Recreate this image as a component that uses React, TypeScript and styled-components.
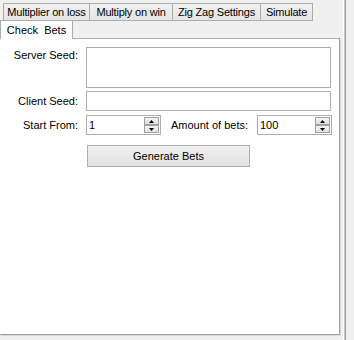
import * as React from 'react'
import styled, {createGlobalStyle} from 'styled-components'

const Global = createGlobalStyle`
  html, body {
    margin: 0;
    padding: 0;
    background: #f0f0f0;
  }
  body {
    font-family: "Liberation Sans", Arial, sans-serif;
    font-size: 11px;
    color: #000;
  }
`

const Window = styled.div`
  display: flex;
  width: 354px;
  height: 340px;
  overflow: hidden;
  background: #f0f0f0;
`

const TabControl = styled.div`
  display: flex;
  flex-direction: column;
  width: 340px;
  height: 335px;
`

const TabStrip = styled.div`
  display: flex;
  flex-direction: column;
  height: 39px;
  padding-top: 3px;
  box-sizing: border-box;
`

const TabRow = styled.div<{$indent: number}>`
  display: flex;
  padding-left: ${p => p.$indent}px;
  height: 18px;
`

const Tab = styled.div<{$w: number; $active?: boolean}>`
  box-sizing: border-box;
  width: ${p => p.$w}px;
  height: 18px;
  display: flex;
  align-items: center;
  justify-content: center;
  white-space: pre;
  letter-spacing: -0.2px;
  border: 1px solid #acacac;
  border-right: none;
  background: linear-gradient(#f0f0f0, #e5e5e5);
  &:last-child {
    border-right: 1px solid #acacac;
  }
  ${p => p.$active && `
    background: #fff;
    border-bottom: none;
    margin-top: -1px;
    height: 19px;
    position: relative;
    z-index: 1;
    letter-spacing: 0;
  `}
`

const Page = styled.div`
  flex: 1;
  background: #fff;
  border-top: 1px solid #acacac;
  border-right: 1px solid #a0a0a0;
  border-bottom: 1px solid #a0a0a0;
  box-shadow: 1px 1px 0 #d9d9d9;
  margin-top: -1px;
  padding: 8px 0 0 0;
  display: flex;
  flex-direction: column;
  gap: 3px;
`

const Row = styled.div<{$top?: boolean}>`
  display: flex;
  align-items: ${p => (p.$top ? 'flex-start' : 'center')};
`

const Label = styled.div<{$inline?: boolean}>`
  width: ${p => (p.$inline ? 77 : 78)}px;
  text-align: right;
  margin-left: ${p => (p.$inline ? 10 : 0)}px;
  margin-right: ${p => (p.$inline ? 9 : 8)}px;
  white-space: nowrap;
`

const TextBox = styled.div<{$h: number}>`
  box-sizing: border-box;
  width: 245px;
  height: ${p => p.$h}px;
  border: 1px solid #abadb3;
  background: #fff;
`

const Numeric = styled.div`
  box-sizing: border-box;
  width: 75px;
  height: 20px;
  border: 1px solid #abadb3;
  display: flex;
  align-items: center;
  padding-left: 2px;
`

const NumValue = styled.div`
  flex: 1;
`

const Spinner = styled.div`
  display: flex;
  flex-direction: column;
  width: 15px;
  height: 16px;
  margin-right: 1px;
`

const SpinButton = styled.div`
  flex: 1;
  box-sizing: border-box;
  border: 1px solid #a0a0a0;
  background: linear-gradient(#f4f4f4, #e0e0e0);
  display: flex;
  align-items: center;
  justify-content: center;
`

const Button = styled.div`
  box-sizing: border-box;
  width: 163px;
  height: 22px;
  margin-left: 87px;
  margin-top: 7px;
  border: 1px solid #adadad;
  background: linear-gradient(#f2f2f2, #e2e2e2);
  display: flex;
  align-items: center;
  justify-content: center;
`

const Side = styled.div`
  margin-left: 3px;
  width: 3px;
  height: 100%;
  border-left: 1px solid #fff;
  border-right: 1px solid #a0a0a0;
  background: #c8c8c8;
  box-sizing: border-box;
`

const Arrow = ({up}: {up?: boolean}) => (
  <svg width="5" height="3" viewBox="0 0 5 3">
    <path d={up ? 'M2.5 0L5 3H0z' : 'M0 0H5L2.5 3z'} fill="#000" />
  </svg>
)

const NumericUpDown = ({value}: {value: string}) => (
  <Numeric>
    <NumValue>{value}</NumValue>
    <Spinner>
      <SpinButton><Arrow up /></SpinButton>
      <SpinButton><Arrow /></SpinButton>
    </Spinner>
  </Numeric>
)

const App = () => (
  <Window>
    <Global />
    <TabControl>
      <TabStrip>
        <TabRow $indent={3}>
          <Tab $w={86}>Multiplier on loss</Tab>
          <Tab $w={83}>Multiply on win</Tab>
          <Tab $w={88}>Zig Zag Settings</Tab>
          <Tab $w={53}>Simulate</Tab>
        </TabRow>
        <TabRow $indent={0}>
          <Tab $w={73} $active>{'Check  Bets'}</Tab>
        </TabRow>
      </TabStrip>
      <Page>
        <Row $top>
          <Label style={{marginTop: 2}}>Server Seed:</Label>
          <TextBox $h={41} />
        </Row>
        <Row>
          <Label>Client Seed:</Label>
          <TextBox $h={20} />
        </Row>
        <Row style={{marginTop: 1}}>
          <Label>Start From:</Label>
          <NumericUpDown value="1" />
          <Label $inline>Amount of bets:</Label>
          <NumericUpDown value="100" />
        </Row>
        <Button>Generate Bets</Button>
      </Page>
    </TabControl>
    <Side />
  </Window>
)

export default App
